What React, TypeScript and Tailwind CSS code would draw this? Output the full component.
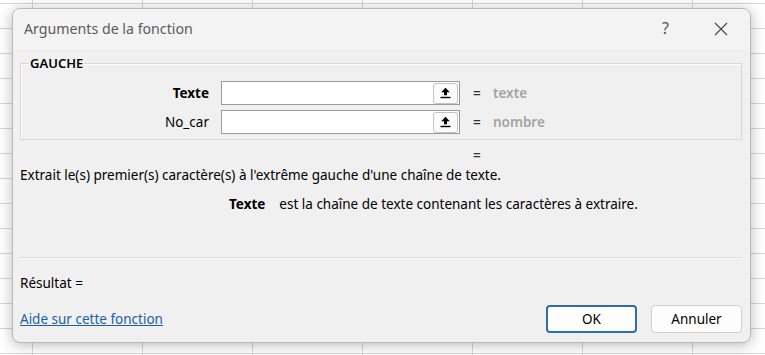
import React from "react";

function UpIcon() {
  return (
    <svg width="11" height="12" viewBox="0 0 11 12" fill="none">
      <path d="M5.5 0.8 L9.8 5.2 L7 5.2 L7 8.3 L4 8.3 L4 5.2 L1.2 5.2 Z" fill="#000" />
      <rect x="0.5" y="9.8" width="10" height="1.4" fill="#000" />
    </svg>
  );
}

function ArgRow({ label, bold, hint }: { label: string; bold?: boolean; hint: string }) {
  return (
    <div className="flex items-center h-[24px]">
      <div className={`w-[188px] text-right text-[13.5px] text-black ${bold ? "font-bold" : ""}`}>{label}</div>
      <div className="ml-[12px] w-[239px] h-[24px] bg-white border border-[#9a9a9a] flex items-center justify-end pr-[1px]">
        <div className="w-[25px] h-[21px] border border-[#c4c4c4] rounded-[3px] bg-[#fbfbfb] flex items-center justify-center">
          <UpIcon />
        </div>
      </div>
      <div className="ml-[13px] w-[8px] text-[13.5px] text-[#333] font-semibold">=</div>
      <div className="ml-[12px] text-[13.5px] font-semibold text-[#a3a3a3]">{hint}</div>
    </div>
  );
}

export default function App() {
  return (
    <div
      className="w-[765px] h-[355px] overflow-hidden bg-white bg-[linear-gradient(to_right,#d6d6d6_1px,transparent_1px),linear-gradient(to_bottom,#d6d6d6_1px,transparent_1px)] bg-[size:110px_25px] bg-[position:32px_3px] pt-[8px] pl-[12px]"
      style={{ fontFamily: '"Noto Sans", "Open Sans", sans-serif' }}
    >
      <div className="w-[739px] h-[335px] rounded-[8px] border border-[#b9b9b9] bg-[#f0f0f0] shadow-[0_2px_14px_rgba(0,0,0,0.28)] flex flex-col overflow-hidden">
        <div className="h-[40px] bg-[#f3f3f3] flex items-center pl-[11px] pr-[22px]">
          <div className="text-[14.2px] text-[#5a5a5a] flex-1">Arguments de la fonction</div>
          <div className="text-[16px] text-[#555] mr-[45px] mt-[-2px]">?</div>
          <svg width="14" height="14" viewBox="0 0 14 14">
            <path d="M1 1 L13 13 M13 1 L1 13" stroke="#444" strokeWidth="1.1" />
          </svg>
        </div>
        <div className="px-[7px] flex flex-col">
          <fieldset className="mt-[7px] w-[722px] h-[84px] border border-[#d8d8d8] shadow-[inset_1px_1px_0_#fbfbfb] px-0">
            <legend className="ml-[8px] px-[1px] text-[13px] font-semibold text-black leading-[14px]">GAUCHE</legend>
            <div className="flex flex-col gap-[5px] mt-[11px]">
              <ArgRow label="Texte" bold hint="texte" />
              <ArgRow label="No_car" hint="nombre" />
            </div>
          </fieldset>
          <div className="ml-[453px] mt-[5px] h-[20px] text-[13.5px] text-[#333] font-semibold leading-[20px]">=</div>
          <div className="text-[13.5px] text-black leading-[20px]">
            Extrait le(s) premier(s) caractère(s) à l'extrême gauche d'une chaîne de texte.
          </div>
          <div className="mt-[9px] flex text-[13.5px] text-black leading-[20px]">
            <span className="ml-[209px] font-bold">Texte</span>
            <span className="ml-[14px]">est la chaîne de texte contenant les caractères à extraire.</span>
          </div>
          <div className="mt-[43px] w-[722px] h-[2px] border-t border-[#dcdcdc] border-b border-b-[#fafafa]"></div>
          <div className="mt-[14px] text-[13.5px] text-black leading-[20px]">Résultat =</div>
          <div className="mt-[12px] flex items-center w-[722px]">
            <a href="#" className="flex-1 text-[13.5px] text-[#1d5ea6] underline">Aide sur cette fonction</a>
            <button className="w-[91px] h-[28px] rounded-[4px] border-2 border-[#2f6ea8] bg-[#fdfdfd] text-[13.5px] text-black">OK</button>
            <button className="ml-[14px] w-[91px] h-[28px] rounded-[4px] border border-[#cfcfcf] bg-[#fdfdfd] text-[13.5px] text-black">Annuler</button>
          </div>
        </div>
      </div>
    </div>
  );
}
